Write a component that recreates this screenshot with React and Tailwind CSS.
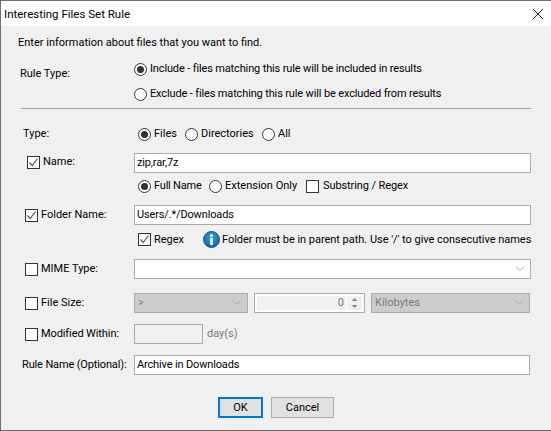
import React from "react";

const Radio = ({ on }) => (
  <span className="w-[13px] h-[13px] rounded-full border border-[#333333] bg-white flex items-center justify-center shrink-0">
    {on && <span className="w-[7px] h-[7px] rounded-full bg-[#333333]" />}
  </span>
);

const Check = ({ on, className = "" }) => (
  <span className={`w-[13px] h-[13px] border border-[#333333] bg-white flex items-center justify-center shrink-0 ${className}`}>
    {on && (
      <svg width="11" height="11" viewBox="0 0 11 11" fill="none" stroke="#555555" strokeWidth="1.2">
        <path d="M1.5 5.5 L4.2 8.5 L9.5 1.5" />
      </svg>
    )}
  </span>
);

const RadioItem = ({ on, label, className = "" }) => (
  <span className={`flex items-center gap-[3px] ${className}`}>
    <Radio on={on} />
    <span>{label}</span>
  </span>
);

const Chevron = ({ color = "#a8a8a8" }) => (
  <svg width="10" height="6" viewBox="0 0 10 6" fill="none" stroke={color} strokeWidth="1">
    <path d="M1 0.5 L5 4.5 L9 0.5" />
  </svg>
);

const Field = ({ children, className = "" }) => (
  <div className={`h-[20px] border border-[#acacac] bg-white flex items-center pl-[2px] tracking-[-0.15px] ${className}`}>{children}</div>
);

const Row = ({ className = "", children }) => <div className={`flex items-center ${className}`}>{children}</div>;

const App = () => {
  return (
    <div
      className="w-[551px] h-[431px] bg-[#f0f0f0] border-l border-t border-b border-[#6e6e6e] text-[11px] leading-[16px] text-black overflow-hidden flex flex-col font-['Roboto',sans-serif]"
    >
      {/* Title bar */}
      <div className="h-[25px] bg-white flex items-center justify-between pl-[3px] pr-[8px] shrink-0">
        <span className="text-[11.5px]">Interesting Files Set Rule</span>
        <svg width="10" height="10" viewBox="0 0 10 10" stroke="#222222" strokeWidth="1">
          <path d="M0 0 L10 10 M10 0 L0 10" />
        </svg>
      </div>

      <div className="flex-1 flex flex-col">
        <div className="ml-[17px] mt-[9px]">Enter information about files that you want to find.</div>

        {/* Rule type */}
        <div className="flex mt-[10px] ml-[19px]">
          <span className="w-[114px] mt-[5px]">Rule Type:</span>
          <div className="flex flex-col gap-[9px] tracking-[-0.14px]">
            <RadioItem on label="Include - files matching this rule will be included in results" />
            <RadioItem label="Exclude - files matching this rule will be excluded from results" />
          </div>
        </div>
        <div className="ml-[20px] w-[510px] h-[1px] bg-[#a0a0a0] mt-[6px]" />

        {/* Type */}
        <Row className="mt-[17px] ml-[22px]">
          <span className="w-[115px]">Type:</span>
          <RadioItem on label="Files" className="w-[47px]" />
          <RadioItem label="Directories" className="w-[77px]" />
          <RadioItem label="All" />
        </Row>

        {/* Name */}
        <Row className="mt-[11px] ml-[26px]">
          <Check on className="mb-[2px]" />
          <span className="ml-[3px] w-[91px] mb-[2px]">Name:</span>
          <Field className="w-[397px]">zip,rar,7z</Field>
        </Row>
        <Row className="mt-[5px] ml-[137px]">
          <RadioItem on label="Full Name" className="w-[71px] tracking-[-0.2px]" />
          <RadioItem label="Extension Only" className="w-[97px]" />
          <span className="flex items-center gap-[4px] tracking-[-0.1px]">
            <Check />
            Substring / Regex
          </span>
        </Row>

        {/* Folder name */}
        <Row className="mt-[11px] ml-[24px]">
          <Check on />
          <span className="ml-[3px] w-[93px]">Folder Name:</span>
          <Field className="w-[397px]">Users/.*/Downloads</Field>
        </Row>
        <Row className="mt-[6px] ml-[137px]">
          <span className="w-[65px] shrink-0 flex items-center gap-[3px]">
            <Check on />
            Regex
          </span>
          <svg width="17" height="17" viewBox="0 0 17 17" className="shrink-0">
            <defs>
              <radialGradient id="info" cx="50%" cy="35%" r="70%">
                <stop offset="0%" stopColor="#3d9ad8" />
                <stop offset="100%" stopColor="#0f5f9c" />
              </radialGradient>
            </defs>
            <circle cx="8.5" cy="8.5" r="8" fill="url(#info)" stroke="#14588c" strokeWidth="1" />
            <circle cx="8.5" cy="4.5" r="1.5" fill="#ffffff" />
            <rect x="7.2" y="7" width="2.6" height="7" fill="#ffffff" />
          </svg>
          <span className="ml-[2px] whitespace-nowrap tracking-[-0.03px]">Folder must be in parent path. Use '/' to give consecutive names</span>
        </Row>

        {/* MIME */}
        <Row className="mt-[11px] ml-[24px]">
          <Check />
          <span className="ml-[3px] w-[93px]">MIME Type:</span>
          <Field className="w-[397px] justify-end pr-[5px]">
            <Chevron />
          </Field>
        </Row>

        {/* File size */}
        <Row className="mt-[14px] ml-[24px]">
          <Check />
          <span className="ml-[3px] w-[93px]">File Size:</span>
          <div className="w-[114px] h-[20px] border border-[#acacac] bg-[#cccccc] flex items-center justify-between pl-[3px] pr-[5px] text-[#7a7a7a]">
            &gt;
            <Chevron />
          </div>
          <div className="ml-[6px] w-[111px] h-[20px] border border-[#acacac] bg-white flex p-[2px]">
            <div className="flex-1 bg-[#f0f0f0] text-right pr-[2px] text-[#7a7a7a] leading-[14px]">0</div>
            <div className="w-[15px] flex flex-col justify-between ml-[1px]">
              <svg width="15" height="7" viewBox="0 0 15 7" className="bg-[#f0f0f0]"><path d="M4.5 5 L7.5 2 L10.5 5 Z" fill="#8a8a8a" /></svg>
              <svg width="15" height="7" viewBox="0 0 15 7" className="bg-[#f0f0f0]"><path d="M4.5 2 L7.5 5 L10.5 2 Z" fill="#8a8a8a" /></svg>
            </div>
          </div>
          <div className="ml-[6px] w-[159px] h-[20px] border border-[#acacac] bg-[#cccccc] flex items-center justify-between pl-[3px] pr-[5px] text-[#7a7a7a]">
            Kilobytes
            <Chevron />
          </div>
        </Row>

        {/* Modified within */}
        <Row className="mt-[11px] ml-[24px]">
          <Check />
          <span className="ml-[3px] w-[93px] whitespace-nowrap tracking-[-0.1px]">Modified Within:</span>
          <div className="w-[69px] h-[20px] border border-[#acacac] bg-[#f0f0f0]" />
          <span className="ml-[4px] text-[#7a7a7a]">day(s)</span>
        </Row>

        {/* Rule name */}
        <Row className="mt-[11px] ml-[21px]">
          <span className="w-[112px] whitespace-nowrap tracking-[-0.14px]">Rule Name (Optional):</span>
          <Field className="w-[396px]">Archive in Downloads</Field>
        </Row>

        {/* Buttons */}
        <div className="mt-[22px] flex justify-center gap-[8px]">
          <button className="w-[45px] h-[21px] bg-[#e1e1e1] border-2 border-[#0078d7] flex items-center justify-center">OK</button>
          <button className="w-[63px] h-[21px] bg-[#e1e1e1] border border-[#adadad] flex items-center justify-center">Cancel</button>
        </div>
      </div>
    </div>
  );
};

export default App;
